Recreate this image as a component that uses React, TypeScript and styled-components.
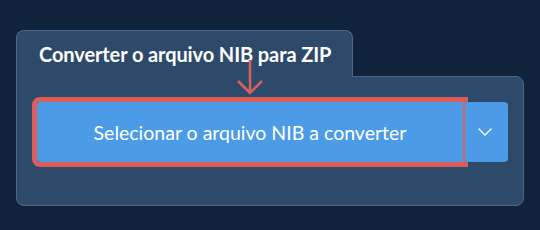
import React from 'react';
import styled, { createGlobalStyle } from 'styled-components';

const GlobalStyle = createGlobalStyle`
  html, body {
    margin: 0;
    padding: 0;
    background-color: #11233a;
  }
  body {
    font-family: Lato, 'Noto Sans', sans-serif;
  }
`;

const Page = styled.div`
  width: 540px;
  height: 230px;
  padding: 30px 0 0 16px;
  box-sizing: border-box;
`;

const Card = styled.div`
  width: 508px;
  display: flex;
  flex-direction: column;
  align-items: flex-start;
`;

const Tab = styled.div`
  position: relative;
  z-index: 1;
  width: 337px;
  height: 47px;
  margin-bottom: -1px;
  box-sizing: border-box;
  padding: 11px 0 0 22px;
  background-color: #2d4a6a;
  border: 1px solid #4b6786;
  border-bottom: none;
  border-radius: 8px 8px 0 0;
  color: #ffffff;
  font-weight: 700;
  font-size: 20px;
  letter-spacing: -0.1px;
`;

const Panel = styled.div`
  width: 508px;
  height: 130px;
  box-sizing: border-box;
  padding: 25px 0 0 20px;
  background-color: #2d4a6a;
  border: 1px solid #4b6786;
  border-radius: 0 8px 8px 8px;
`;

const ButtonGroup = styled.div`
  position: relative;
  display: flex;
  gap: 2px;
  height: 60px;
`;

const MainButton = styled.button`
  width: 426px;
  height: 60px;
  border: none;
  border-radius: 3px 0 0 3px;
  background-color: #4b9be6;
  color: #ffffff;
  font-family: Lato, 'Noto Sans', sans-serif;
  font-size: 19.5px;
  font-weight: 400;
  outline: 5px solid #dc5e5a;
  cursor: pointer;
`;

const DropButton = styled.button`
  width: 43px;
  height: 60px;
  border: none;
  border-radius: 0 4px 4px 0;
  background-color: #4b9be6;
  display: flex;
  align-items: center;
  justify-content: center;
  padding: 0 4px 0 0;
  cursor: pointer;
`;

const Pointer = styled.svg`
  position: absolute;
  z-index: 2;
  left: 198px;
  top: -44px;
`;

const App: React.FC = () => {
  return (
    <>
      <GlobalStyle />
      <Page>
        <Card>
          <Tab>Converter o arquivo NIB para ZIP</Tab>
          <Panel>
            <ButtonGroup>
              <MainButton>Selecionar o arquivo NIB a converter</MainButton>
              <DropButton>
                <svg width="16" height="10" viewBox="0 0 16 10">
                  <path d="M1.5 1.5 L8 8 L14.5 1.5" fill="none" stroke="#ffffff" strokeWidth="1.3" />
                </svg>
              </DropButton>
              <Pointer width="30" height="38" viewBox="0 0 30 38">
                <path
                  d="M15 2 V35 M3 23 L15 35 L27 23"
                  fill="none"
                  stroke="#dc5e5a"
                  strokeWidth="2.5"
                />
              </Pointer>
            </ButtonGroup>
          </Panel>
        </Card>
      </Page>
    </>
  );
};

export default App;
